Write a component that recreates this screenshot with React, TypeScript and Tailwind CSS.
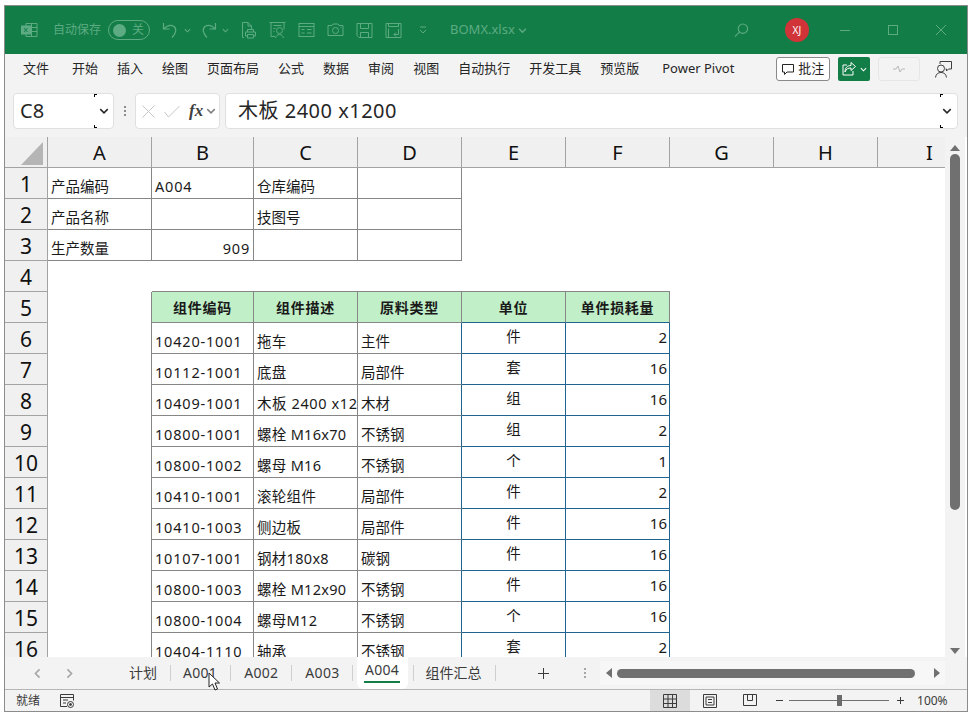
import { ReactNode } from "react";

const tabs = ["开始", "插入", "绘图", "页面布局", "公式", "数据", "审阅", "视图", "自动执行", "开发工具", "预览版"];
const columns = ["A", "B", "C", "D", "E", "F", "G", "H", "I"];

const parts = [
  ["10420-1001", "拖车", "主件", "件", "2"],
  ["10112-1001", "底盘", "局部件", "套", "16"],
  ["10409-1001", "木板 2400 x1200", "木材", "组", "16"],
  ["10800-1001", "螺栓 M16x70", "不锈钢", "组", "2"],
  ["10800-1002", "螺母 M16", "不锈钢", "个", "1"],
  ["10410-1001", "滚轮组件", "局部件", "件", "2"],
  ["10410-1003", "侧边板", "局部件", "件", "16"],
  ["10107-1001", "钢材180x8", "碳钢", "件", "16"],
  ["10800-1003", "螺栓 M12x90", "不锈钢", "件", "16"],
  ["10800-1004", "螺母M12", "不锈钢", "个", "16"],
  ["10404-1110", "轴承", "不锈钢", "套", "2"],
];

const partHeaders = ["组件编码", "组件描述", "原料类型", "单位", "单件损耗量"];

function Icon({ w = 16, h = 16, box = "0 0 16 16", className = "", children }: { w?: number; h?: number; box?: string; className?: string; children: ReactNode }) {
  return (
    <svg width={w} height={h} viewBox={box} fill="none" stroke="currentColor" strokeWidth="1" className={`shrink-0 ${className}`}>
      {children}
    </svg>
  );
}

function Chevron({ size = 7, className = "" }: { size?: number; className?: string }) {
  return (
    <Icon w={size} h={size} box="0 0 8 8" className={className}>
      <path d="M1 2.5 4 5.5 7 2.5" strokeWidth="1.2" />
    </Icon>
  );
}

function TitleBar() {
  return (
    <div className="h-[48px] shrink-0 bg-[#137d47] flex items-center text-[#5dab83] text-[12px] relative">
      <Icon className="ml-[16px]" w={17} h={18} box="0 0 17 18">
        <path d="M5 2.5h11v13H5zM5 6.5h11M5 10.5h11M10.5 2.5v13" />
        <rect x="0.5" y="5" width="9" height="8" fill="#5dab83" />
        <path d="M3 7l3.5 4M6.5 7 3 11" stroke="#137d47" />
      </Icon>
      <span className="ml-[15px] w-[48px]">自动保存</span>
      <div className="ml-[7px] w-[42px] h-[20px] rounded-full border border-[#5dab83] flex items-center pl-[4px] gap-[6px]">
        <div className="w-[13px] h-[13px] rounded-full bg-[#5dab83]" />
        <span>关</span>
      </div>
      <Icon className="ml-[12px]" w={16} h={16}>
        <path d="M1.500 1v6h6M1.700 7C5 3.500 9 2.500 12 4.500c3 2.500 2 7-2 11" strokeWidth="1.200" />
      </Icon>
      <Chevron className="ml-[6px]" />
      <Icon className="ml-[10px]" w={16} h={16}>
        <path d="M14.500 1v6h-6M14.300 7C11 3.500 7 2.500 4 4.500c-3 2.500-2 7 2 11" strokeWidth="1.200" />
      </Icon>
      <Chevron className="ml-[5px]" />
      <Icon className="ml-[12px]" w={15} h={18} box="0 0 15 18">
        <path d="M3 16.500H1.500V1.500H7l3.500 3.500v3M7 1.500V5h3.500M4.500 11h10v4h-2M6.500 15h-2v-4M6.500 11V8.500h6V11M6.500 13.500h6v3.500h-6z" />
      </Icon>
      <Icon className="ml-[13px]" w={17} h={18} box="0 0 17 18">
        <path d="M.5 1.500h16M2 1.500v14h4M15 1.500v7M4.500 4.500h8M4.500 7.500h2M4.500 10.500h1" />
        <circle cx="10.500" cy="9.500" r="3" />
        <path d="M6.500 17c.5-2 2-3.500 4-3.500s3.500 1.500 4 3.500" />
      </Icon>
      <Icon className="ml-[12px]" w={17} h={16} box="0 0 17 16">
        <rect x="1" y="1.500" width="15" height="13" />
        <path d="M1 4.500h15M3.500 7.500h3M9 7.500h4.500M3.500 11h3M9 11h4.500" />
      </Icon>
      <Icon className="ml-[12px]" w={17} h={16} box="0 0 17 16">
        <path d="M1 3.500h4l1-1.500h5l1 1.500h4v10H1z" />
        <circle cx="8.500" cy="8.500" r="3" />
        <path d="M13.500 5.500h1" />
      </Icon>
      <Icon className="ml-[12px]" w={17} h={17} box="0 0 17 17">
        <path d="M1 1.500h15v14H3l-2-2zM4.500 1.500v5h8v-5M4.500 15.500v-5h8v5" />
      </Icon>
      <Icon className="ml-[12px]" w={17} h={17} box="0 0 17 17">
        <path d="M1 1.500h15v14H1zM3.500 1.500v3h10v-3M3.500 6.500v9M13.500 7v5.500H9M11 10.500l-2 2 2 2" />
      </Icon>
      <Icon className="ml-[17px]" w={8} h={8} box="0 0 8 8">
        <path d="M1 1h6M1 4l3 3 3-3" />
      </Icon>
      <span className="ml-[23px] text-[13px]">BOMX.xlsx</span>
      <Chevron size={9} className="ml-[3px]" />
      <Icon className="ml-[207px]" w={15} h={15}>
        <circle cx="9.500" cy="6" r="5" strokeWidth="1.200" />
        <path d="M6 9.500 1 14.500" strokeWidth="1.200" />
      </Icon>
      <div className="ml-[36px] w-[24px] h-[24px] rounded-full bg-[#d13438] text-white text-[10px] flex items-center justify-center">XJ</div>
      <div className="ml-[31px] w-[10px] h-px bg-[#5dab83]" />
      <div className="ml-[38px] w-[10px] h-[10px] border border-[#5dab83]" />
      <Icon className="ml-[38px]" w={10} h={10} box="0 0 10 10">
        <path d="M0 0l10 10M10 0 0 10" />
      </Icon>
    </div>
  );
}

function Ribbon() {
  return (
    <div className="h-[36px] shrink-0 bg-[#f3f3f3] flex items-center pb-[6px] text-[13px] text-[#262626]">
      <span className="ml-[18px] mr-[23px] whitespace-nowrap">文件</span>
      <div className="flex items-center gap-[19px]">
        {tabs.map((t) => (
          <span key={t} className="whitespace-nowrap">{t}</span>
        ))}
      </div>
      <span className="ml-[23px] w-[73px] whitespace-nowrap">Power Pivot</span>
      <div className="ml-[41px] w-[54px] h-[24px] rounded-[3px] border border-[#8a8a8a] bg-white flex items-center justify-center gap-[4px]">
        <Icon w={12} h={11} box="0 0 12 11">
          <path d="M.5.500h11v7.500H5L2.500 10.500V8H.5z" />
        </Icon>
        <span>批注</span>
      </div>
      <div className="ml-[8px] w-[32px] h-[24px] rounded-[2px] bg-[#137d47] text-white flex items-center justify-center gap-[4px]">
        <Icon w={14} h={14} box="0 0 14 14">
          <path d="M9 .500l4.500 4-4.500 4v-2.500c-3 0-5 1-6 4 0-4 2-6.500 6-6.500zM5 3H1v10h10V9" />
        </Icon>
        <Chevron size={7} />
      </div>
      <div className="ml-[8px] w-[42px] h-[24px] rounded-[3px] border border-[#e6e6e6] text-[#b8b8b8] flex items-center justify-center">
        <Icon w={12} h={8} box="0 0 12 8">
          <path d="M0 4h3l2-3 2 6 2-3h3" />
        </Icon>
      </div>
      <Icon className="ml-[15px] text-[#404040]" w={17} h={17} box="0 0 17 17">
        <path d="M5 3V.500h11.500V8H13.500l-2 2V8h-1" />
        <circle cx="6" cy="7.500" r="3.500" />
        <path d="M.5 16.500c.5-3.500 2.500-5 5.500-5s5 1.500 5.500 5" />
      </Icon>
    </div>
  );
}

function ResizeMarks({ cls }: { cls: string }) {
  return (
    <>
      <div className={`absolute top-0 w-[3px] h-[3px] border-l border-t border-black ${cls}`} />
      <div className={`absolute bottom-0 w-[3px] h-[3px] border-l border-b border-black ${cls}`} />
    </>
  );
}

function FormulaBar() {
  return (
    <div className="h-[47px] shrink-0 bg-[#f3f3f3] flex pt-[3px] text-[#262626]">
      <div className="ml-[8px] w-[101px] h-[36px] rounded-[4px] border border-[#e0e0e0] bg-white flex items-center pl-[6px] pr-[4px] relative">
        <span className="text-[20px] flex-1">C8</span>
        <Chevron size={10} />
        <ResizeMarks cls="right-[16px]" />
      </div>
      <div className="ml-[10px] w-[2px] mt-[13px] h-[10px] border-l-2 border-dotted border-[#8c8c8c]" />
      <div className="ml-[9px] w-[85px] h-[36px] rounded-[4px] border border-[#e0e0e0] bg-white flex items-center pl-[6px] text-[#c6c6c6]">
        <Icon w={13} h={13} box="0 0 13 13">
          <path d="M.5.500l12 12M12.500.500l-12 12" />
        </Icon>
        <Icon className="ml-[9px]" w={16} h={13} box="0 0 16 13">
          <path d="M.5 7l4 5L15.500 1" />
        </Icon>
        <span className="ml-[9px] text-[17px] italic font-['Liberation_Serif',serif] font-bold text-[#404040]">fx</span>
        <Chevron size={10} className="ml-[3px] text-[#808080]" />
      </div>
      <div className="ml-[5px] w-[733px] h-[36px] rounded-[4px] border border-[#e0e0e0] bg-white flex items-center pl-[12px] pr-[5px] relative">
        <span className="text-[20px] flex-1 whitespace-nowrap tracking-[0.5px]">木板 2400 x1200</span>
        <Chevron size={10} />
        <ResizeMarks cls="right-[14px]" />
      </div>
    </div>
  );
}

function Cell({ cls = "", children }: { cls?: string; children?: ReactNode }) {
  return <div className={`h-[31px] min-w-0 overflow-hidden whitespace-nowrap flex text-[14.5px] text-[#1a1a1a] ${cls}`}>{children}</div>;
}

function Sheet() {
  const rows: ReactNode[] = [];
  const head = "bg-[#f0f0f0] border-r border-b border-[#a3a3a3] items-center justify-center text-[#111111]";
  const infoBorder = "border-r border-b border-[#868686]";
  const text = "items-end pl-[3px]";

  const num = (n: number) => (
    <Cell cls={`${head} text-[21px] pt-[3px]`} key={`n${n}`}>{n}</Cell>
  );

  const info = [
    ["产品编码", "A004", "仓库编码", ""],
    ["产品名称", "", "技图号", ""],
    ["生产数量", "909", "", ""],
  ];
  info.forEach((r, i) => {
    rows.push(num(i + 1));
    r.forEach((v, c) => (
      rows.push(
        <Cell key={`i${i}${c}`} cls={`${infoBorder} ${v === "909" ? "items-end pr-[3px] justify-end tracking-[0.8px]" : `${text} ${v === "A004" ? "tracking-[0.8px]" : ""}`}`}>{v}</Cell>
      )
    ));
    rows.push(<div key={`b${i}`} className="col-span-5 h-[31px]" />);
  });

  rows.push(num(4));
  rows.push(<div key="r4a" className="h-[31px]" />);
  for (let c = 0; c < 5; c++) rows.push(<div key={`r4${c}`} className="h-[31px] border-b border-[#868686]" />);
  rows.push(<div key="r4e" className="col-span-3 h-[31px]" />);

  rows.push(num(5));
  rows.push(<div key="r5a" className="h-[31px] border-r border-[#868686]" />);
  partHeaders.forEach((h, c) => (
    rows.push(
      <Cell key={h} cls={`bg-[#c1efc8] border-r items-center justify-center font-bold text-[14px] tracking-[0.7px] border-[#868686] border-b ${c > 2 ? "border-b-[#1f6391]" : ""}`}>{h}</Cell>
    )
  ));
  rows.push(<div key="r5e" className="col-span-3 h-[31px]" />);

  parts.forEach((p, i) => {
    rows.push(num(i + 6));
    rows.push(<div key={`a${i}`} className="h-[31px] border-r border-[#868686]" />);
    rows.push(<Cell key={`p0${i}`} cls={`${infoBorder} ${text} tracking-[0.8px]`}>{p[0]}</Cell>);
    rows.push(<Cell key={`p1${i}`} cls={`${infoBorder} ${text} ${i === 2 ? "tracking-[0.6px]" : "tracking-[0.3px]"}`}>{p[1]}</Cell>);
    rows.push(<Cell key={`p2${i}`} cls={`border-b border-[#868686] border-r border-r-[#1f6391] ${text}`}>{p[2]}</Cell>);
    rows.push(<Cell key={`p3${i}`} cls="border-r border-b border-[#1f6391] items-center justify-center pb-[2px] text-[13.5px]">{p[3]}</Cell>);
    rows.push(<Cell key={`p4${i}`} cls="border-r border-b border-[#1f6391] items-center justify-end pr-[2px] pb-[1px] text-[15px]">{p[4]}</Cell>);
    rows.push(<div key={`e${i}`} className="col-span-3 h-[31px]" />);
  });

  return (
    <div className="h-[520px] shrink-0 flex bg-white">
      <div className="w-[940px] overflow-hidden">
        <div className="grid grid-cols-[43px_104px_102px_104px_104px_104px_104px_104px_104px_104px] grid-rows-[repeat(17,31px)]">
          <div className="h-[31px] bg-[#f0f0f0] border-r border-b border-[#a3a3a3] relative">
            <svg width="23" height="26" viewBox="0 0 23 26" className="absolute right-[3px] bottom-[1px]">
              <path d="M22 2v23H0z" fill="#b5b5b5" />
            </svg>
          </div>
          {columns.map((c) => (
            <Cell key={c} cls={`${head} text-[20px] pt-[1px]`}>{c}</Cell>
          ))}
          {rows}
        </div>
      </div>
      <div className="w-[20px] bg-[#f3f3f3] flex flex-col items-center pt-[8px] pb-[3px] relative">
        <div className="w-0 h-0 border-x-[5px] border-x-transparent border-b-[6px] border-b-[#707070]" />
        <div className="mt-[3px] w-[10px] h-[356px] rounded-full bg-[#707070]" />
        <div className="mt-auto w-0 h-0 border-x-[5px] border-x-transparent border-t-[6px] border-t-[#707070]" />
      </div>
    </div>
  );
}

function SheetTabs() {
  return (
    <div className="h-[33px] shrink-0 bg-[#f3f3f3] border-b border-[#b5b5b5] flex items-center text-[14px] text-[#3b3b3b] relative">
      <Chevron size={11} className="ml-[27px] rotate-90 text-[#a6a6a6]" />
      <Chevron size={11} className="ml-[21px] -rotate-90 text-[#a6a6a6]" />
      <span className="ml-[54px] pb-[1px]">计划</span>
      <div className="ml-[13px] w-px h-[16px] bg-[#cfcfcf]" />
      <span className="ml-[12px] pb-[1px] tracking-[0.3px]">A001</span>
      <div className="ml-[13px] w-px h-[16px] bg-[#cfcfcf]" />
      <span className="ml-[13px] pb-[1px] tracking-[0.3px]">A002</span>
      <div className="ml-[13px] w-px h-[16px] bg-[#cfcfcf]" />
      <span className="ml-[13px] pb-[1px] tracking-[0.3px]">A003</span>
      <div className="ml-[12px] w-px h-[16px] bg-[#cfcfcf]" />
      <div className="ml-[4px] w-[51px] h-[32px] self-start bg-white rounded-b-[6px] flex flex-col items-center pt-[3px]">
        <span className="leading-[20px] tracking-[0.3px]">A004</span>
        <div className="mt-[1px] w-[36px] h-[2px] bg-[#137d47]" />
      </div>
      <div className="ml-[5px] w-px h-[16px] bg-[#cfcfcf]" />
      <span className="ml-[12px] pb-[1px]">组件汇总</span>
      <div className="ml-[13px] w-px h-[16px] bg-[#cfcfcf]" />
      <Icon className="ml-[42px]" w={11} h={11} box="0 0 11 11">
        <path d="M5.500 0v11M0 5.500h11" />
      </Icon>
      <div className="ml-[35px] w-[2px] h-[10px] border-l-2 border-dotted border-[#a6a6a6]" />
      <div className="ml-[14px] w-[345px] h-[24px] bg-[#f7f7f7] flex items-center pl-[6px]">
        <div className="w-0 h-0 border-y-[5px] border-y-transparent border-r-[6px] border-r-[#707070]" />
        <div className="ml-[5px] w-[298px] h-[9px] rounded-full bg-[#707070]" />
        <div className="ml-[19px] w-0 h-0 border-y-[5px] border-y-transparent border-l-[6px] border-l-[#707070]" />
      </div>
      <svg width="14" height="20" viewBox="0 0 14 20" className="absolute left-[203px] top-[15px]">
        <path d="M1 1v14l3.500-3 2.500 6 2.500-1-2.500-6h4.500z" fill="#fff" stroke="#222" />
      </svg>
    </div>
  );
}

function StatusBar() {
  return (
    <div className="flex-1 bg-[#f3f3f3] flex items-center text-[12px] text-[#3b3b3b]">
      <span className="ml-[11px]">就绪</span>
      <Icon className="ml-[20px]" w={14} h={14} box="0 0 14 14">
        <path d="M7 12.500H.5V.5h13v6M.5 3.500h13M3 6h5M3 9h3" />
        <circle cx="10.500" cy="10.500" r="3" />
        <circle cx="10.500" cy="10.500" r="1" fill="currentColor" />
      </Icon>
      <div className="ml-[576px] w-[40px] h-[21px] bg-[#dcdcdc] flex items-center justify-center">
        <Icon w={14} h={14} box="0 0 14 14">
          <path d="M.5.500h13v13H.5zM.5 5h13M.5 9.500h13M5 .500v13M9.500.500v13" />
        </Icon>
      </div>
      <Icon className="ml-[13px]" w={14} h={14} box="0 0 14 14">
        <path d="M.5.500h13v13H.5zM3 3h8v8H3zM5 5.500h4M5 8.500h4" />
      </Icon>
      <Icon className="ml-[26px]" w={14} h={14} box="0 0 14 14">
        <path d="M.5.500h13v11H.5zM4.500.500v6h5v-6" />
      </Icon>
      <div className="ml-[19px] w-[7px] h-px bg-[#3b3b3b]" />
      <div className="ml-[6px] w-[100px] h-px bg-[#707070] relative">
        <div className="absolute left-[48px] -top-[5px] w-[5px] h-[11px] bg-[#6b6b6b]" />
      </div>
      <Icon className="ml-[8px]" w={7} h={7} box="0 0 7 7">
        <path d="M3.500 0v7M0 3.500h7" />
      </Icon>
      <span className="ml-[13px]">100%</span>
    </div>
  );
}

export default function App() {
  return (
    <div className="w-[972px] h-[716px] bg-white pl-[4px] pt-[5px] font-['Noto_Sans','Noto_Sans_CJK_SC',sans-serif] overflow-hidden">
      <div className="w-[964px] h-[707px] border border-[#8c8c8c] flex flex-col overflow-hidden">
        <TitleBar />
        <Ribbon />
        <FormulaBar />
        <Sheet />
        <SheetTabs />
        <StatusBar />
      </div>
    </div>
  );
}
